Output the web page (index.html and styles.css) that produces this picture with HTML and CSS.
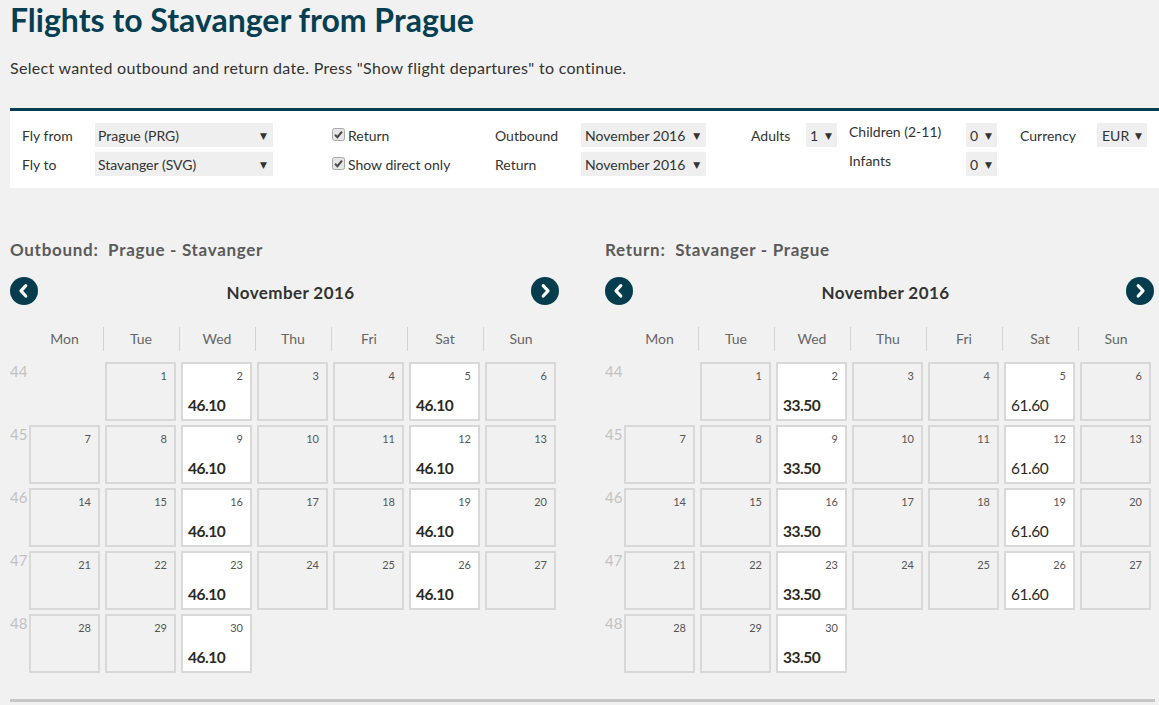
FILE: index.html
```html
<!DOCTYPE html>
<html lang="en">
<head>
<meta charset="utf-8">
<title>Flights to Stavanger from Prague</title>
<link rel="stylesheet" href="styles.css">
</head>
<body>
<div class="page">
  <h1 class="title">Flights to Stavanger from Prague</h1>
  <p class="lead">Select wanted outbound and return date. Press "Show flight departures" to continue.</p>

  <div class="search">
    <div class="lbl">Fly from</div>
    <div class="cell"><div class="sel w-city">Prague (PRG)<span class="arr">&#9660;</span></div></div>
    <div class="chk"><svg class="box" viewBox="0 0 13 13" width="13" height="13"><rect x="0.5" y="0.5" width="12" height="12" rx="2" fill="#e6e6e6" stroke="#a8a8a8"/><path d="M3 6.8 L5.4 9.2 L10 3.6" fill="none" stroke="#4a4a4a" stroke-width="2"/></svg>Return</div>
    <div class="lbl">Outbound</div>
    <div class="cell"><div class="sel w-month">November 2016<span class="arr">&#9660;</span></div></div>
    <div class="lbl">Adults</div>
    <div class="cell"><div class="sel w-num">1<span class="arr">&#9660;</span></div></div>
    <div class="lbl lbl-top">Children (2-11)</div>
    <div class="cell"><div class="sel w-num">0<span class="arr">&#9660;</span></div></div>
    <div class="lbl">Currency</div>
    <div class="cell"><div class="sel w-cur">EUR<span class="arr">&#9660;</span></div></div>

    <div class="lbl">Fly to</div>
    <div class="cell"><div class="sel w-city">Stavanger (SVG)<span class="arr">&#9660;</span></div></div>
    <div class="chk"><svg class="box" viewBox="0 0 13 13" width="13" height="13"><rect x="0.5" y="0.5" width="12" height="12" rx="2" fill="#e6e6e6" stroke="#a8a8a8"/><path d="M3 6.8 L5.4 9.2 L10 3.6" fill="none" stroke="#4a4a4a" stroke-width="2"/></svg>Show direct only</div>
    <div class="lbl">Return</div>
    <div class="cell"><div class="sel w-month">November 2016<span class="arr">&#9660;</span></div></div>
    <div></div>
    <div></div>
    <div class="lbl lbl-top">Infants</div>
    <div class="cell"><div class="sel w-num">0<span class="arr">&#9660;</span></div></div>
    <div></div>
    <div></div>
  </div>

  <div class="calendars">
    <section class="cal">
      <h2 class="cal-title">Outbound:&nbsp; Prague - Stavanger</h2>
      <div class="cal-nav">
        <button class="nav-btn" type="button" aria-label="Previous month"><svg viewBox="0 0 28 28" width="28" height="28"><circle cx="14" cy="14" r="14" fill="#053d4f"/><path d="M15.8 8.6 L11 13.8 L15.8 19" fill="none" stroke="#fff" stroke-width="3.2" stroke-linecap="round" stroke-linejoin="round"/></svg></button>
        <div class="month">November 2016</div>
        <button class="nav-btn" type="button" aria-label="Next month"><svg viewBox="0 0 28 28" width="28" height="28"><circle cx="14" cy="14" r="14" fill="#053d4f"/><path d="M12.2 8.6 L17 13.8 L12.2 19" fill="none" stroke="#fff" stroke-width="3.2" stroke-linecap="round" stroke-linejoin="round"/></svg></button>
      </div>
      <div class="dow-row">
        <div></div>
        <div class="dow first">Mon</div><div class="dow">Tue</div><div class="dow">Wed</div><div class="dow">Thu</div><div class="dow">Fri</div><div class="dow">Sat</div><div class="dow">Sun</div>
      </div>
      <div class="cal-grid">
        <div class="wk">44</div><div></div>
        <div class="day"><span class="num">1</span></div>
        <div class="day has"><span class="num">2</span><span class="price p-bold">46.10</span></div>
        <div class="day"><span class="num">3</span></div>
        <div class="day"><span class="num">4</span></div>
        <div class="day has"><span class="num">5</span><span class="price p-bold">46.10</span></div>
        <div class="day"><span class="num">6</span></div>

        <div class="wk">45</div>
        <div class="day"><span class="num">7</span></div>
        <div class="day"><span class="num">8</span></div>
        <div class="day has"><span class="num">9</span><span class="price p-bold">46.10</span></div>
        <div class="day"><span class="num">10</span></div>
        <div class="day"><span class="num">11</span></div>
        <div class="day has"><span class="num">12</span><span class="price p-bold">46.10</span></div>
        <div class="day"><span class="num">13</span></div>

        <div class="wk">46</div>
        <div class="day"><span class="num">14</span></div>
        <div class="day"><span class="num">15</span></div>
        <div class="day has"><span class="num">16</span><span class="price p-bold">46.10</span></div>
        <div class="day"><span class="num">17</span></div>
        <div class="day"><span class="num">18</span></div>
        <div class="day has"><span class="num">19</span><span class="price p-bold">46.10</span></div>
        <div class="day"><span class="num">20</span></div>

        <div class="wk">47</div>
        <div class="day"><span class="num">21</span></div>
        <div class="day"><span class="num">22</span></div>
        <div class="day has"><span class="num">23</span><span class="price p-bold">46.10</span></div>
        <div class="day"><span class="num">24</span></div>
        <div class="day"><span class="num">25</span></div>
        <div class="day has"><span class="num">26</span><span class="price p-bold">46.10</span></div>
        <div class="day"><span class="num">27</span></div>

        <div class="wk">48</div>
        <div class="day"><span class="num">28</span></div>
        <div class="day"><span class="num">29</span></div>
        <div class="day has"><span class="num">30</span><span class="price p-bold">46.10</span></div>
      </div>
    </section>

    <section class="cal">
      <h2 class="cal-title">Return:&nbsp; Stavanger - Prague</h2>
      <div class="cal-nav">
        <button class="nav-btn" type="button" aria-label="Previous month"><svg viewBox="0 0 28 28" width="28" height="28"><circle cx="14" cy="14" r="14" fill="#053d4f"/><path d="M15.8 8.6 L11 13.8 L15.8 19" fill="none" stroke="#fff" stroke-width="3.2" stroke-linecap="round" stroke-linejoin="round"/></svg></button>
        <div class="month">November 2016</div>
        <button class="nav-btn" type="button" aria-label="Next month"><svg viewBox="0 0 28 28" width="28" height="28"><circle cx="14" cy="14" r="14" fill="#053d4f"/><path d="M12.2 8.6 L17 13.8 L12.2 19" fill="none" stroke="#fff" stroke-width="3.2" stroke-linecap="round" stroke-linejoin="round"/></svg></button>
      </div>
      <div class="dow-row">
        <div></div>
        <div class="dow first">Mon</div><div class="dow">Tue</div><div class="dow">Wed</div><div class="dow">Thu</div><div class="dow">Fri</div><div class="dow">Sat</div><div class="dow">Sun</div>
      </div>
      <div class="cal-grid">
        <div class="wk">44</div><div></div>
        <div class="day"><span class="num">1</span></div>
        <div class="day has"><span class="num">2</span><span class="price p-mid">33.50</span></div>
        <div class="day"><span class="num">3</span></div>
        <div class="day"><span class="num">4</span></div>
        <div class="day has"><span class="num">5</span><span class="price p-reg">61.60</span></div>
        <div class="day"><span class="num">6</span></div>

        <div class="wk">45</div>
        <div class="day"><span class="num">7</span></div>
        <div class="day"><span class="num">8</span></div>
        <div class="day has"><span class="num">9</span><span class="price p-mid">33.50</span></div>
        <div class="day"><span class="num">10</span></div>
        <div class="day"><span class="num">11</span></div>
        <div class="day has"><span class="num">12</span><span class="price p-reg">61.60</span></div>
        <div class="day"><span class="num">13</span></div>

        <div class="wk">46</div>
        <div class="day"><span class="num">14</span></div>
        <div class="day"><span class="num">15</span></div>
        <div class="day has"><span class="num">16</span><span class="price p-mid">33.50</span></div>
        <div class="day"><span class="num">17</span></div>
        <div class="day"><span class="num">18</span></div>
        <div class="day has"><span class="num">19</span><span class="price p-reg">61.60</span></div>
        <div class="day"><span class="num">20</span></div>

        <div class="wk">47</div>
        <div class="day"><span class="num">21</span></div>
        <div class="day"><span class="num">22</span></div>
        <div class="day has"><span class="num">23</span><span class="price p-mid">33.50</span></div>
        <div class="day"><span class="num">24</span></div>
        <div class="day"><span class="num">25</span></div>
        <div class="day has"><span class="num">26</span><span class="price p-reg">61.60</span></div>
        <div class="day"><span class="num">27</span></div>

        <div class="wk">48</div>
        <div class="day"><span class="num">28</span></div>
        <div class="day"><span class="num">29</span></div>
        <div class="day has"><span class="num">30</span><span class="price p-mid">33.50</span></div>
      </div>
    </section>
  </div>

  <div class="bottom-rule"></div>
</div>
</body>
</html>
```

FILE: styles.css
```css
* { box-sizing: border-box; }

html, body {
  margin: 0;
  padding: 0;
  background: #f1f1f1;
  font-family: Lato, "Open Sans", "DejaVu Sans", sans-serif;
  color: #333;
  overflow: hidden;
}

.page {
  padding: 0 0 0 10px;
  width: 1159px;
}

.title {
  margin: 0;
  font-size: 32px;
  line-height: 40px;
  font-weight: 700;
  color: #063f51;
}

.lead {
  margin: 18px 0 0;
  font-size: 16px;
  line-height: 20px;
  letter-spacing: 0.3px;
  color: #333;
}

.search {
  margin-top: 30px;
  background: #fff;
  border-top: 3px solid #063f51;
  padding: 12px 0 12px 12px;
  display: grid;
  grid-template-columns: 73px 237px 163px 86px 170px 55px 43px 117px 54px 77px 50px;
  grid-auto-rows: 24px;
  row-gap: 5px;
  align-items: center;
  font-size: 14px;
}

.lbl {
  color: #333;
  line-height: 24px;
  padding-top: 1px;
  white-space: nowrap;
}

.lbl-top {
  line-height: 18px;
  padding-top: 0;
  align-self: start;
}

.cell { display: flex; }

.sel {
  height: 24px;
  background: #efefef;
  display: flex;
  align-items: center;
  justify-content: space-between;
  padding: 1px 6px 0 3px;
  color: #333;
  white-space: nowrap;
}

.arr {
  font-size: 9px;
  color: #333;
  margin-left: 8px;
}

.w-city { width: 178px; }
.w-month { width: 125px; padding-left: 4px; }
.w-num { width: 31px; padding: 1px 5px 0 4px; }
.w-num .arr { margin-left: 4px; }
.w-cur { width: 50px; padding: 1px 5px 0 5px; }
.w-cur .arr { margin-left: 4px; }

.chk {
  display: flex;
  align-items: center;
  gap: 3px;
  color: #333;
  white-space: nowrap;
  padding-top: 1px;
}

.chk .box { flex: none; margin-top: -2px; }

.calendars {
  display: flex;
  gap: 46px;
  margin-top: 52px;
}

.cal { width: 549px; }

.cal-title {
  margin: 0;
  font-size: 17px;
  line-height: 20px;
  font-weight: 700;
  letter-spacing: 0.7px;
  color: #5a5a5a;
}

.cal-nav {
  margin-top: 17px;
  height: 28px;
  display: flex;
  align-items: center;
}

.nav-btn {
  width: 28px;
  height: 28px;
  padding: 0;
  border: 0;
  background: none;
  display: block;
  flex: none;
}

.nav-btn svg { display: block; }

.month {
  flex: 1;
  text-align: center;
  padding-left: 12px;
  font-size: 17px;
  font-weight: 700;
  letter-spacing: 0.4px;
  color: #333;
  padding-top: 3px;
}

.dow-row {
  margin-top: 22px;
  display: grid;
  grid-template-columns: 16.5px repeat(7, 76px);
  height: 24px;
}

.dow {
  border-left: 1px solid #d4d4d4;
  text-align: center;
  font-size: 14px;
  line-height: 24px;
  color: #666;
}

.dow.first { border-left: 0; }

.cal-grid {
  margin-top: 11px;
  display: grid;
  grid-template-columns: 16.5px repeat(7, 76px);
  grid-auto-rows: 59px;
  row-gap: 4px;
}

.wk {
  font-size: 15px;
  color: #c2c2c2;
  line-height: 16px;
  padding-top: 1px;
}

.day {
  justify-self: center;
  width: 71px;
  height: 59px;
  border: 2px solid #d8d8d8;
  background: #f1f1f1;
  display: flex;
  flex-direction: column;
  justify-content: space-between;
  padding: 5px 6px 5px 5px;
}

.day.has { background: #fff; }

.num {
  align-self: flex-end;
  font-size: 11px;
  line-height: 14px;
  color: #555;
  padding-right: 1px;
}

.price {
  font-size: 15.5px;
  line-height: 18px;
  letter-spacing: -0.5px;
  color: #2b2b1e;
}

.p-bold { font-weight: 700; }
.p-mid { font-weight: 700; }
.p-reg { font-weight: 400; }

.bottom-rule {
  margin-top: 26px;
  height: 3px;
  width: 1145px;
  background: #c6c6c6;
}
```
